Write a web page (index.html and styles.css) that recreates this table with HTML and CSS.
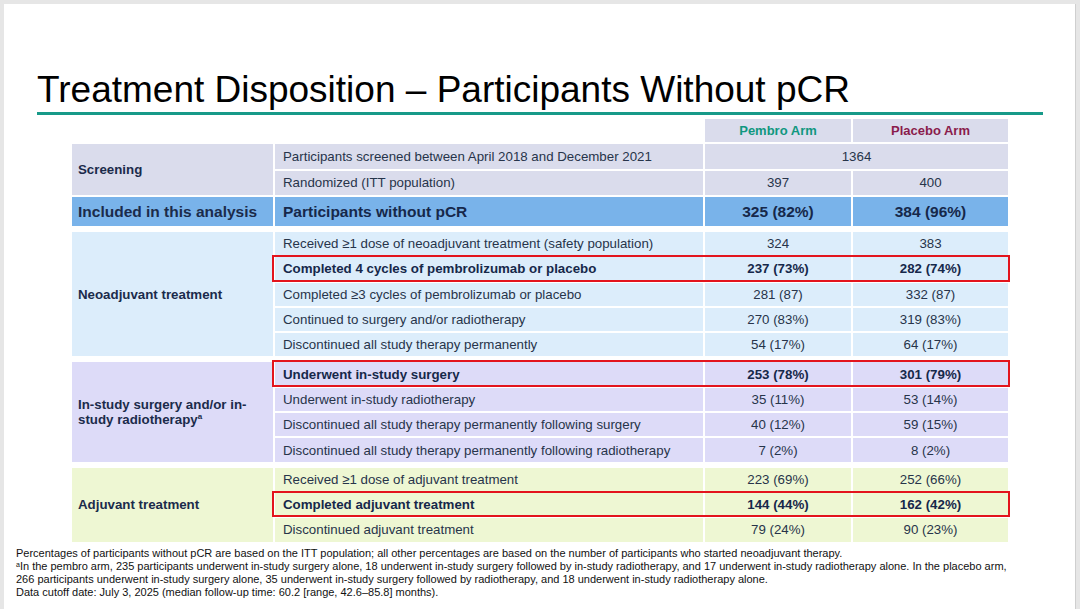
FILE: index.html
```html
<!DOCTYPE html>
<html lang="en">
<head>
<meta charset="utf-8">
<title>Treatment Disposition – Participants Without pCR</title>
<link rel="stylesheet" href="styles.css">
</head>
<body>
<div class="page">
  <h1 class="title">Treatment Disposition – Participants Without pCR</h1>

  <div class="disp">
    <div class="sec sec-head">
      <div class="label blank"></div>
      <div class="rows">
        <div class="row row-head">
          <div class="c blank"></div>
          <div class="c arm arm-pembro">Pembro Arm</div>
          <div class="c arm arm-placebo">Placebo Arm</div>
        </div>
      </div>
    </div>

    <div class="sec sec-screen">
      <div class="label"><span>Screening</span></div>
      <div class="rows">
        <div class="row row-screen">
          <div class="c desc">Participants screened between April 2018 and December 2021</div>
          <div class="c num span2">1364</div>
        </div>
        <div class="row row-screen">
          <div class="c desc">Randomized (ITT population)</div>
          <div class="c num">397</div>
          <div class="c num">400</div>
        </div>
      </div>
    </div>

    <div class="sec sec-incl">
      <div class="label"><span>Included in this analysis</span></div>
      <div class="rows">
        <div class="row row-incl">
          <div class="c desc">Participants without pCR</div>
          <div class="c num">325 (82%)</div>
          <div class="c num">384 (96%)</div>
        </div>
      </div>
    </div>

    <div class="sec sec-neo spaced">
      <div class="label"><span>Neoadjuvant treatment</span></div>
      <div class="rows">
        <div class="row">
          <div class="c desc">Received ≥1 dose of neoadjuvant treatment (safety population)</div>
          <div class="c num">324</div>
          <div class="c num">383</div>
        </div>
        <div class="row hl">
          <div class="c desc">Completed 4 cycles of pembrolizumab or placebo</div>
          <div class="c num">237 (73%)</div>
          <div class="c num">282 (74%)</div>
        </div>
        <div class="row">
          <div class="c desc">Completed ≥3 cycles of pembrolizumab or placebo</div>
          <div class="c num">281 (87)</div>
          <div class="c num">332 (87)</div>
        </div>
        <div class="row">
          <div class="c desc">Continued to surgery and/or radiotherapy</div>
          <div class="c num">270 (83%)</div>
          <div class="c num">319 (83%)</div>
        </div>
        <div class="row">
          <div class="c desc">Discontinued all study therapy permanently</div>
          <div class="c num">54 (17%)</div>
          <div class="c num">64 (17%)</div>
        </div>
      </div>
    </div>

    <div class="sec sec-study spaced">
      <div class="label"><span>In-study surgery and/or in-<br>study radiotherapy<sup>a</sup></span></div>
      <div class="rows">
        <div class="row hl">
          <div class="c desc">Underwent in-study surgery</div>
          <div class="c num">253 (78%)</div>
          <div class="c num">301 (79%)</div>
        </div>
        <div class="row">
          <div class="c desc">Underwent in-study radiotherapy</div>
          <div class="c num">35 (11%)</div>
          <div class="c num">53 (14%)</div>
        </div>
        <div class="row">
          <div class="c desc">Discontinued all study therapy permanently following surgery</div>
          <div class="c num">40 (12%)</div>
          <div class="c num">59 (15%)</div>
        </div>
        <div class="row">
          <div class="c desc">Discontinued all study therapy permanently following radiotherapy</div>
          <div class="c num">7 (2%)</div>
          <div class="c num">8 (2%)</div>
        </div>
      </div>
    </div>

    <div class="sec sec-adj spaced">
      <div class="label"><span>Adjuvant treatment</span></div>
      <div class="rows">
        <div class="row">
          <div class="c desc">Received ≥1 dose of adjuvant treatment</div>
          <div class="c num">223 (69%)</div>
          <div class="c num">252 (66%)</div>
        </div>
        <div class="row hl">
          <div class="c desc">Completed adjuvant treatment</div>
          <div class="c num">144 (44%)</div>
          <div class="c num">162 (42%)</div>
        </div>
        <div class="row">
          <div class="c desc">Discontinued adjuvant treatment</div>
          <div class="c num">79 (24%)</div>
          <div class="c num">90 (23%)</div>
        </div>
      </div>
    </div>
  </div>

  <div class="notes">
    Percentages of participants without pCR are based on the ITT population; all other percentages are based on the number of participants who started neoadjuvant therapy.<br>
    <sup>a</sup>In the pembro arm, 235 participants underwent in-study surgery alone, 18 underwent in-study surgery followed by in-study radiotherapy, and 17 underwent in-study radiotherapy alone. In the placebo arm,<br>
    266 participants underwent in-study surgery alone, 35 underwent in-study surgery followed by radiotherapy, and 18 underwent in-study radiotherapy alone.<br>
    Data cutoff date: July 3, 2025 (median follow-up time: 60.2 [range, 42.6–85.8] months).
  </div>
</div>
</body>
</html>
```

FILE: styles.css
```css
html, body {
  margin: 0;
  padding: 0;
}
body {
  background: #e6e6e6;
  font-family: "Liberation Sans", Arial, sans-serif;
  width: 1080px;
  height: 609px;
  overflow: hidden;
}
.page {
  margin: 4px 0 0 4px;
  width: 1072px;
  height: 605px;
  background: #ffffff;
  border-right: 1px solid #cfcfcf;
  box-sizing: border-box;
  padding-top: 64px;
}
.title {
  margin: 0 0 0 33px;
  width: 1006px;
  font-weight: normal;
  font-size: 37px;
  line-height: 43px;
  color: #000;
  padding-bottom: 1px;
  border-bottom: 3px solid #179a89;
  white-space: nowrap;
}
.disp {
  margin: 4px 0 0 68px;
  display: flex;
  flex-direction: column;
  gap: 2px;
  width: 936px;
}
.sec {
  display: flex;
  gap: 2px;
}
.sec.spaced {
  margin-top: 4px;
}
.label {
  width: 201px;
  box-sizing: border-box;
  padding: 0 6px;
  display: flex;
  align-items: center;
  font-weight: bold;
  font-size: 13.3px;
  line-height: 15px;
  color: #1b2b4b;
}
.label sup {
  font-size: 8px;
  line-height: 0;
  vertical-align: 5px;
}
.rows {
  display: flex;
  flex-direction: column;
  gap: 2px;
}
.row {
  display: grid;
  grid-template-columns: 428px 146px 155px;
  column-gap: 2px;
  height: 23.3px;
  position: relative;
}
.row-head { height: 23px; }
.row-screen { height: 24.5px; }
.row-incl { height: 29px; }
.c {
  display: flex;
  align-items: center;
  font-size: 13.3px;
  color: #27344a;
  white-space: nowrap;
}
.desc {
  padding-left: 8px;
}
.num {
  justify-content: center;
}
.span2 {
  grid-column: span 2;
}
.blank {
  background: transparent !important;
}
.arm {
  justify-content: center;
  font-weight: bold;
  font-size: 13px;
  background: #dadcec;
}
.arm-pembro { color: #10977f; }
.arm-placebo { color: #8a1c4c; }

.sec-screen .label,
.sec-screen .c { background: #dadcec; }

.sec-incl .label,
.sec-incl .c { background: #79b3ea; }
.sec-incl .label { font-size: 15.5px; }
.sec-incl .c {
  font-weight: bold;
  font-size: 15.5px;
  color: #16284a;
}

.sec-neo .label,
.sec-neo .c { background: #dcedfb; }

.sec-study .label,
.sec-study .c { background: #dddbf8; }

.sec-adj .label,
.sec-adj .c { background: #eef7d3; }

.row.hl .c {
  font-weight: bold;
  color: #16284a;
}
.row.hl::after {
  content: "";
  position: absolute;
  top: -2px;
  bottom: -1px;
  left: -3px;
  right: -2px;
  border: 2px solid #e3141d;
  pointer-events: none;
}

.notes {
  margin: 5px 0 0 12px;
  font-size: 11px;
  line-height: 13.3px;
  color: #111;
  white-space: nowrap;
}
.notes sup {
  font-size: 7px;
  line-height: 0;
  vertical-align: 3px;
}
```
